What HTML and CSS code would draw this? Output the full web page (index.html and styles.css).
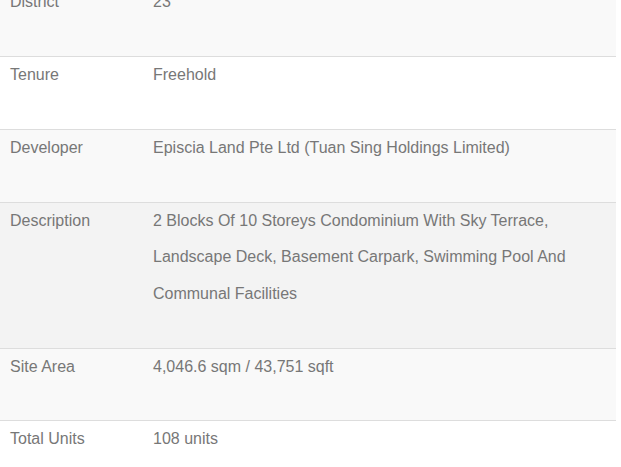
FILE: index.html
```html
<!DOCTYPE html>
<html lang="en">
<head>
<meta charset="utf-8">
<title>Project Details</title>
<link rel="stylesheet" href="styles.css">
</head>
<body>
<table class="details">
  <tbody>
    <tr class="odd"><th>District</th><td>23</td></tr>
    <tr><th>Tenure</th><td>Freehold</td></tr>
    <tr class="odd"><th>Developer</th><td>Episcia Land Pte Ltd (Tuan Sing Holdings Limited)</td></tr>
    <tr class="hover"><th>Description</th><td>2 Blocks Of 10 Storeys Condominium With Sky Terrace, Landscape Deck, Basement Carpark, Swimming Pool And Communal Facilities</td></tr>
    <tr class="odd"><th>Site Area</th><td>4,046.6 sqm / 43,751 sqft</td></tr>
    <tr><th>Total Units</th><td>108 units</td></tr>
  </tbody>
</table>
</body>
</html>
```
FILE: styles.css
```css
html, body {
  margin: 0;
  padding: 0;
  background: #ffffff;
}

body {
  font-family: "Liberation Sans", Arial, sans-serif;
  font-size: 16px;
  color: #777777;
}

.details {
  width: 616px;
  margin-top: -15.8px;
  border-collapse: collapse;
}

.details th,
.details td {
  text-align: left;
  font-weight: normal;
  vertical-align: top;
  line-height: 36.6px;
  padding: 0 10px 35.2px 10px;
  border-top: 1px solid #dddddd;
}

.details tr:first-child th,
.details tr:first-child td {
  border-top: none;
}

.details th {
  width: 123px;
}

.details td {
  padding-right: 40px;
}

.details tr.odd {
  background: #f9f9f9;
}

.details tr.hover {
  background: #f3f3f3;
}
```
